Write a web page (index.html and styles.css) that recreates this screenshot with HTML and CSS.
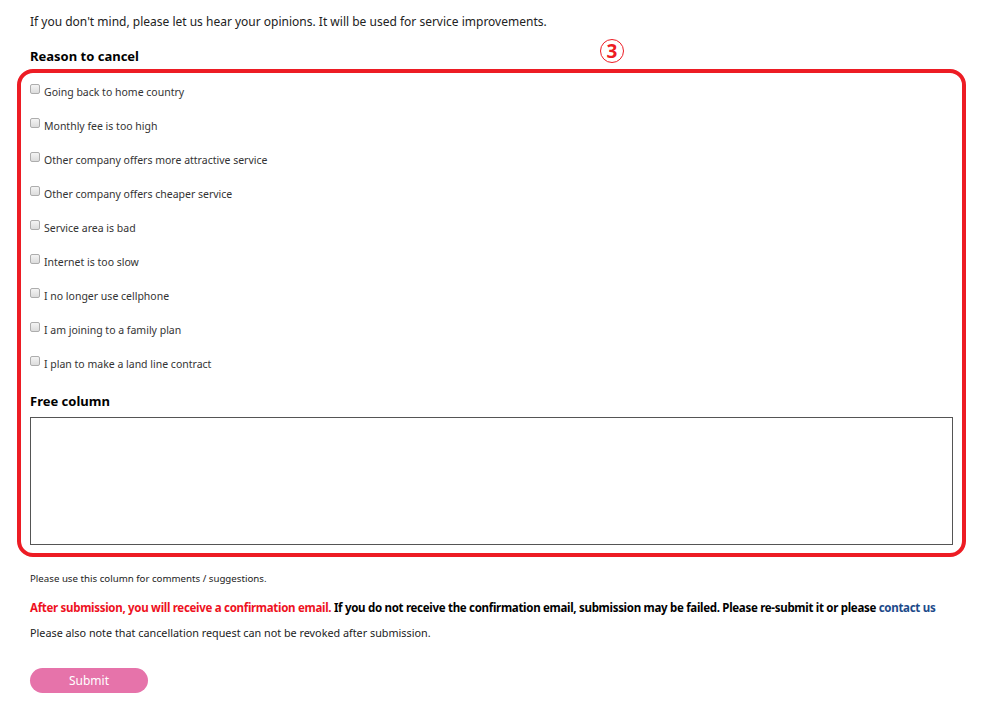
FILE: index.html
```html
<!DOCTYPE html>
<html>
<head>
    <meta charset="utf-8" />
    <title>Cancellation survey</title>
    <link rel="stylesheet" href="styles.css">
</head>
<body>
    <div class="page">
        <p class="intro">If you don't mind, please let us hear your opinions. It will be used for service improvements.</p>
        <h3 class="heading">Reason to cancel</h3>

        <div class="highlight">
            <span class="badge">3</span>
            <label class="reason"><input type="checkbox"> Going back to home country</label>
            <label class="reason"><input type="checkbox"> Monthly fee is too high</label>
            <label class="reason"><input type="checkbox"> Other company offers more attractive service</label>
            <label class="reason"><input type="checkbox"> Other company offers cheaper service</label>
            <label class="reason"><input type="checkbox"> Service area is bad</label>
            <label class="reason"><input type="checkbox"> Internet is too slow</label>
            <label class="reason"><input type="checkbox"> I no longer use cellphone</label>
            <label class="reason"><input type="checkbox"> I am joining to a family plan</label>
            <label class="reason"><input type="checkbox"> I plan to make a land line contract</label>

            <h3 class="heading free">Free column</h3>
            <textarea class="comments"></textarea>
        </div>

        <p class="hint">Please use this column for comments / suggestions.</p>
        <p class="notice"><span class="warn">After submission, you will receive a confirmation email.</span> If you do not receive the confirmation email, submission may be failed. Please re-submit it or please <a href="#">contact us</a></p>
        <p class="note">Please also note that cancellation request can not be revoked after submission.</p>

        <button class="submit" type="button">Submit</button>
    </div>
</body>
</html>
```

FILE: styles.css
```css
body {
    margin: 0;
    font-family: "Noto Sans", "Open Sans", sans-serif;
    color: #222;
    background: #fff;
}

.page {
    padding: 0 29px 0 30px;
}

p {
    margin: 0;
}

.intro {
    margin-top: 13px;
    font-size: 12px;
    line-height: 18px;
}

.heading {
    margin: 15px 0 0 0;
    font-size: 13px;
    line-height: 20px;
    font-weight: bold;
    color: #000;
}

    .heading.free {
        margin: 10px 0 0 0;
    }

.highlight {
    position: relative;
    margin: 3px -13px 0 -13px;
    padding: 2px 9px 8px 9px;
    border: 4px solid #ed1c24;
    border-radius: 16px;
}

.badge {
    position: absolute;
    left: 579px;
    top: -34px;
    width: 22px;
    height: 22px;
    border: 1.5px solid #ed1c24;
    border-radius: 50%;
    color: #ed1c24;
    font-size: 19px;
    font-weight: bold;
    line-height: 22px;
    text-align: center;
}

.reason {
    display: flex;
    align-items: center;
    height: 34px;
    font-size: 10.5px;
    color: #333;
}

    .reason input {
        appearance: none;
        width: 10px;
        height: 10px;
        margin: 0 4px 6px 0;
        border: 1px solid #adadad;
        border-radius: 2px;
        background: linear-gradient(#f4f4f4, #dcdcdc);
    }

.comments {
    display: block;
    width: 100%;
    height: 128px;
    margin-top: 6px;
    box-sizing: border-box;
    border: 1px solid #555;
    resize: none;
}

.hint {
    margin-top: 16px;
    font-size: 9.7px;
    line-height: 12px;
}

.notice {
    margin-top: 14px;
    font-size: 11.5px;
    line-height: 18px;
    font-weight: bold;
    color: #000;
    letter-spacing: -0.3px;
    white-space: nowrap;
}

    .notice .warn {
        color: #ee1122;
    }

    .notice a {
        color: #1c4a8a;
        text-decoration: none;
    }

.note {
    margin-top: 7px;
    font-size: 10.8px;
    line-height: 18px;
}

.submit {
    display: block;
    width: 118px;
    height: 25px;
    margin-top: 26px;
    border: none;
    border-radius: 13px;
    background: #e673aa;
    color: #fff;
    font-family: inherit;
    font-size: 12px;
}
```
